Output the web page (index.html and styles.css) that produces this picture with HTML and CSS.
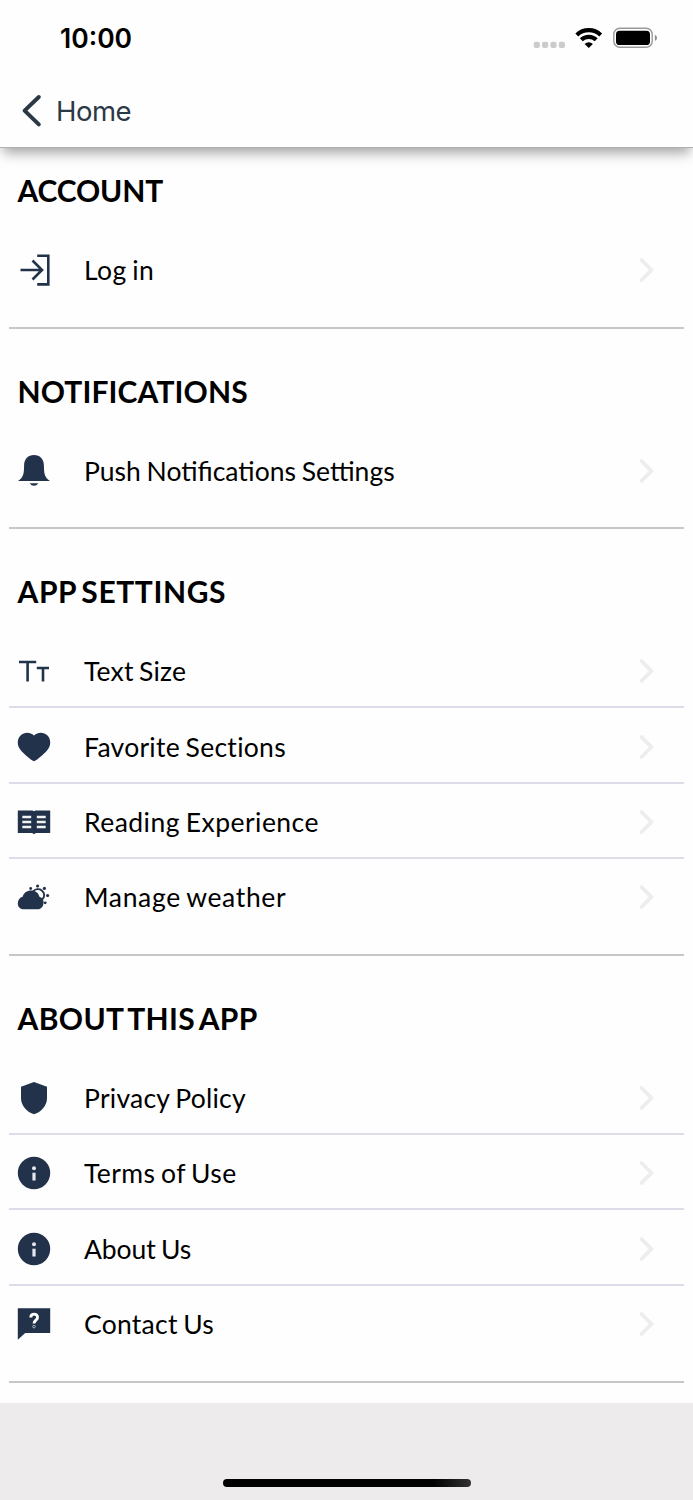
FILE: index.html
```html
<!DOCTYPE html>
<html lang="en">
<head>
    <meta charset="UTF-8">
    <meta name="viewport" content="width=device-width, initial-scale=1.0">
    <title>Settings</title>
    <link rel="stylesheet" href="styles.css">
</head>
<body>
    <!-- shared icons -->
    <svg class="defs" width="0" height="0">
        <symbol id="chevron" viewBox="0 0 16 26">
            <path d="M2.5 3 L12.4 13 L2.5 23" fill="none" stroke="#ededed" stroke-width="3.8" stroke-linecap="round"/>
        </symbol>
        <symbol id="info" viewBox="0 0 34 34">
            <circle cx="17" cy="17" r="16.2" fill="#22324b"/>
            <circle cx="17" cy="12.2" r="2" fill="#e4e7ec"/>
            <path d="M17 16.7 V24.5" stroke="#e4e7ec" stroke-width="3.2"/>
        </symbol>
    </svg>

    <header class="header">
        <div class="status-bar">
            <span class="time">10:00</span>
            <svg class="status-icons" width="126" height="24" viewBox="0 0 126 24">
                <g fill="#cbcbcb">
                    <rect x="3.7" y="15.8" width="6.2" height="6.2" rx="2"/>
                    <rect x="12" y="15.8" width="6.2" height="6.2" rx="2"/>
                    <rect x="20.4" y="15.8" width="6.2" height="6.2" rx="2"/>
                    <rect x="28.8" y="15.8" width="6.2" height="6.2" rx="2"/>
                </g>
                <g fill="none" stroke="#000" stroke-width="4.2">
                    <path d="M46.8 8.9 A17.3 17.3 0 0 1 70.7 8.9"/>
                    <path d="M51.3 13.8 A10.7 10.7 0 0 1 66.2 13.8"/>
                </g>
                <path d="M54.6 17.9 A5.9 5.9 0 0 1 62.9 17.9 L58.75 22 Z"/>
                <rect x="83.8" y="2.3" width="38.4" height="19" rx="6" fill="none" stroke="#999" stroke-width="1.4"/>
                <rect x="86" y="4.8" width="34" height="14.2" rx="3.6"/>
                <path d="M124.9 8.7 Q127 9.6 127 11.8 Q127 14 124.9 15 Z" fill="#8c8c8c"/>
            </svg>
        </div>
        <a class="back" href="#">
            <svg width="22" height="34" viewBox="0 0 22 34">
                <path d="M18.8 3 L4.6 16.6 L18.8 30.4" fill="none" stroke="#2b3947" stroke-width="4" stroke-linecap="round" stroke-linejoin="round"/>
            </svg>
            <span>Home</span>
        </a>
    </header>

    <main>
        <section class="group">
            <h2 class="t-account">ACCOUNT</h2>
            <a class="row" href="#">
                <svg class="icon" viewBox="0 0 34 34">
                    <path d="M3.5 17 H24 M15.5 7.5 L25 17 L15.5 26.5 M20.2 2.8 H31.3 V31.4 H20.2" fill="none" stroke="#22324b" stroke-width="2.6"/>
                </svg>
                <span class="label t-login">Log in</span>
                <svg class="arrow"><use href="#chevron"/></svg>
            </a>
        </section>

        <section class="group">
            <h2 class="t-notif">NOTIFICATIONS</h2>
            <a class="row" href="#">
                <svg class="icon" viewBox="0 0 34 34">
                    <path d="M17 1 C23 1 26.7 5 26.9 11 C27.1 19 27 23 33 27 H1 C7 23 6.9 19 7.1 11 C7.3 5 11 1 17 1 Z M12.7 29.3 H21.3 Q19.8 31.8 17 31.8 Q14.2 31.8 12.7 29.3 Z"/>
                </svg>
                <span class="label t-push">Push Notifications Settings</span>
                <svg class="arrow"><use href="#chevron"/></svg>
            </a>
        </section>

        <section class="group">
            <h2 class="t-app">APP SETTINGS</h2>
            <a class="row" href="#">
                <svg class="icon" viewBox="0 0 34 34">
                    <path d="M2 8 H19.2 M10.6 8 V27.4 M19.8 14 H32 M26 14 V27.4" fill="none" stroke="#22324b" stroke-width="2.6"/>
                </svg>
                <span class="label t-text">Text Size</span>
                <svg class="arrow"><use href="#chevron"/></svg>
            </a>
            <a class="row" href="#">
                <svg class="icon" viewBox="0 0 34 34">
                    <path d="M17 5.6 C21 1.5 27 2.2 30.2 5.2 C34.2 9 34.2 15.5 30.4 20 C26.8 24.2 20.8 29.7 17 31.2 C13.2 29.7 7.2 24.2 3.6 20 C-.2 15.5 -.2 9 3.8 5.2 C7 2.2 13 1.5 17 5.6 Z"/>
                </svg>
                <span class="label t-fav">Favorite Sections</span>
                <svg class="arrow"><use href="#chevron"/></svg>
            </a>
            <a class="row" href="#">
                <svg class="icon" viewBox="0 0 34 34">
                    <path d="M.8 5.5 H15.5 L17 6.3 L18.5 5.5 H33.2 V28 H18.8 L17 29.2 L15.2 28 H.8 Z"/>
                    <path d="M5.3 12 H14.2 M5.3 17 H14.2 M5.3 22 H14.2 M19.8 12 H28.7 M19.8 17 H28.7 M19.8 22 H28.7" stroke="#f1f3ee" stroke-width="2.6"/>
                </svg>
                <span class="label t-read">Reading Experience</span>
                <svg class="arrow"><use href="#chevron"/></svg>
            </a>
            <a class="row" href="#">
                <svg class="icon" viewBox="0 0 34 34">
                    <path d="M6.5 29.2 C3 29.2 .8 26.5 .8 23.4 C.8 19.8 3 17.6 5.6 16.8 C7 12.8 10 10.6 14 10.6 C18.5 10.6 21.5 13 22.4 16.8 C25.7 17.8 27 20.4 26.5 23.4 C26 27 23.7 29.2 20.2 29.2 Z"/>
                    <path d="M16.2 11.5 C18 8.8 22 8.3 24.8 10.4 C28 12.8 27.8 17 25.3 19.2" fill="none" stroke="#22324b" stroke-width="1.9"/>
                    <circle cx="13.7" cy="8.5" r="1.4"/>
                    <circle cx="20.6" cy="6" r="1.6"/>
                    <circle cx="27.4" cy="8.4" r="1.6"/>
                    <circle cx="30.6" cy="15.5" r="1.6"/>
                    <circle cx="28.2" cy="22.8" r="1.4"/>
                </svg>
                <span class="label t-weather">Manage weather</span>
                <svg class="arrow"><use href="#chevron"/></svg>
            </a>
        </section>

        <section class="group">
            <h2 class="t-about-app">ABOUT THIS APP</h2>
            <a class="row" href="#">
                <svg class="icon" viewBox="0 0 34 34">
                    <path d="M17 1 L30 5.8 V17 C30 25 24 31.2 17 33.2 C10 31.2 4 25 4 17 V5.8 Z"/>
                </svg>
                <span class="label t-privacy">Privacy Policy</span>
                <svg class="arrow"><use href="#chevron"/></svg>
            </a>
            <a class="row" href="#">
                <svg class="icon"><use href="#info"/></svg>
                <span class="label t-terms">Terms of Use</span>
                <svg class="arrow"><use href="#chevron"/></svg>
            </a>
            <a class="row" href="#">
                <svg class="icon"><use href="#info"/></svg>
                <span class="label t-about">About Us</span>
                <svg class="arrow"><use href="#chevron"/></svg>
            </a>
            <a class="row" href="#">
                <svg class="icon" viewBox="0 0 34 34">
                    <path d="M.8 1.2 H33.2 V26 H8.2 L.8 32.8 Z"/>
                    <path d="M13.8 10.6 C13.8 6 20.5 6.1 20.5 10.4 C20.5 13.2 17 13 17 16.5" fill="none" stroke="#fff" stroke-width="2.9"/>
                    <circle cx="17" cy="19.6" r="1.3" fill="none" stroke="#b9c0ca" stroke-width=".9"/>
                </svg>
                <span class="label t-contact">Contact Us</span>
                <svg class="arrow"><use href="#chevron"/></svg>
            </a>
        </section>
    </main>

    <footer class="footer">
        <div class="home-indicator"></div>
    </footer>
</body>
</html>
```
FILE: styles.css
```css
* { box-sizing: border-box; }
body {
    margin: 0;
    height: 1500px;
    overflow: hidden;
    display: flex;
    flex-direction: column;
    background: #fefefe;
    color: #000;
    font-family: Lato, "Liberation Sans", sans-serif;
}
a { color: inherit; text-decoration: none; }
.defs { display: block; flex: none; height: 0; }

/* header */
.header {
    height: 148px;
    flex: none;
    background: #fefefe;
    border-bottom: 1px solid #b0b0b0;
    box-shadow: 0 8px 12px -3px rgba(0, 0, 0, .36);
}
.status-bar {
    height: 76px;
    padding: 0 37px 0 60px;
    display: flex;
    align-items: center;
    justify-content: space-between;
    font-family: Inter, sans-serif;
}
.time { font-size: 26.5px; font-weight: 600; }
.status-icons { margin-top: -1px; overflow: visible; }
.back {
    display: flex;
    align-items: center;
    height: 70px;
    padding-left: 20px;
    gap: 14px;
    color: #2b3947;
    font-family: Inter, sans-serif;
    font-size: 27.5px;
    letter-spacing: -.5px;
}

/* groups */
.group {
    margin: 0 9px;
    padding-bottom: 19.7px;
    border-bottom: 2px solid #c7c7c7;
}
.group h2 {
    margin: 0;
    padding: 42px 0 21.8px 8.5px;
    font-size: 30px;
    font-weight: 700;
    line-height: 40px;
    white-space: nowrap;
    word-spacing: -3px;
}
.group:first-child h2 { padding-top: 21.8px; }
.row {
    display: flex;
    align-items: center;
    height: 75.3px;
    padding: 3px 29px 0 7.5px;
    border-bottom: 2px solid #dddde9;
}
.row:last-child { border-bottom-color: transparent; }
.icon {
    width: 34px;
    height: 34px;
    margin-right: 33.5px;
    fill: #22324b;
}
.label {
    flex: 1;
    font-size: 26.5px;
    line-height: 34px;
    white-space: nowrap;
    word-spacing: -1.5px;
}
.arrow { width: 16px; height: 26px; }

/* tracking */
.t-account { letter-spacing: -.15px; }
.t-notif { letter-spacing: .12px; }
.t-app { letter-spacing: .6px; }
.t-about-app { letter-spacing: .35px; }
.t-login { letter-spacing: .4px; }
.t-push { word-spacing: -1px; }
.t-text { letter-spacing: .17px; }
.t-fav { letter-spacing: .28px; }
.t-read { letter-spacing: .47px; }
.t-weather { letter-spacing: .65px; }
.t-privacy { letter-spacing: .25px; }
.t-terms { letter-spacing: .4px; }
.t-about { letter-spacing: -.06px; }
.t-contact { letter-spacing: .25px; }

/* footer */
.footer {
    margin-top: 20px;
    flex: 1;
    padding-top: 76px;
    background: #edebec;
}
.home-indicator {
    width: 248px;
    height: 8px;
    margin: 0 auto;
    border-radius: 4px;
    background: linear-gradient(90deg, #000 85%, #333);
}
```
